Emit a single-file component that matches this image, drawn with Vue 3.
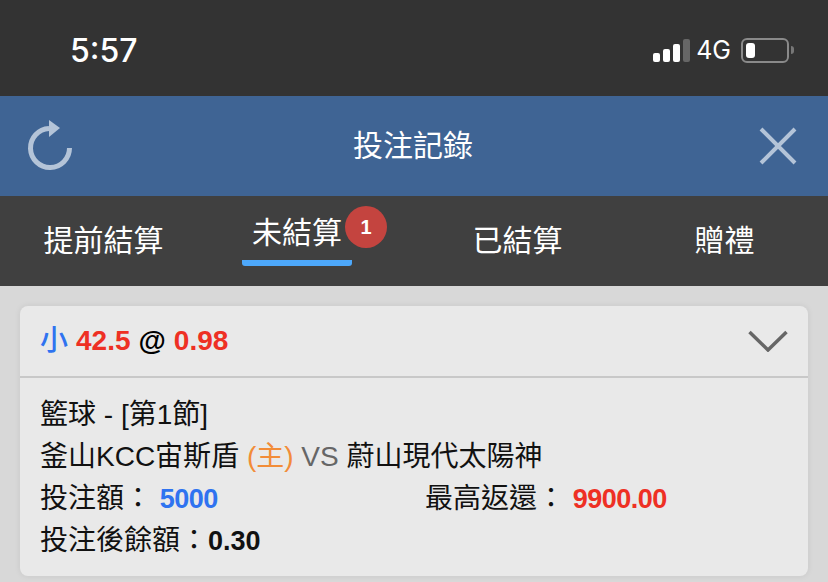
<script setup>
const tabs = [
  { label: '提前結算' },
  { label: '未結算', active: true, badge: 1 },
  { label: '已結算' },
  { label: '贈禮' }
]
</script>

<template>
  <div class="page">
    <div class="status-bar">
      <span class="time">5:57</span>
      <div class="status-right">
        <div class="signal">
          <i class="b1"></i><i class="b2"></i><i class="b3"></i><i class="b4"></i>
        </div>
        <span class="net">4G</span>
        <div class="battery"><i></i></div>
        <div class="battery-tip"></div>
      </div>
    </div>

    <header class="title-bar">
      <svg class="refresh" width="46" height="52" viewBox="0 0 46 52">
        <path d="M22 9.5 A19.5 19.5 0 1 0 42.5 29" fill="none" stroke="#b4c4d8" stroke-width="5" />
        <path d="M22 1 L33 9 L22 18 Z" fill="#b4c4d8" />
      </svg>
      <h1>投注記錄</h1>
      <svg class="close" width="38" height="38" viewBox="0 0 38 38">
        <path d="M2 2 L36 36 M36 2 L2 36" stroke="#b4c4d8" stroke-width="4" />
      </svg>
    </header>

    <nav class="tabs">
      <div v-for="tab in tabs" :key="tab.label" class="tab" :class="{ active: tab.active }">
        <span class="tab-label">
          {{ tab.label }}
          <b v-if="tab.badge" class="badge">{{ tab.badge }}</b>
        </span>
      </div>
    </nav>

    <main class="content">
      <section class="card">
        <div class="card-head">
          <div class="odds">
            <span class="blue cjk">小</span>
            <span class="red">42.5</span>
            <span>@</span>
            <span class="red">0.98</span>
          </div>
          <svg width="40" height="22" viewBox="0 0 40 22">
            <path d="M1.5 2 L20 20 L38.5 2" fill="none" stroke="#666" stroke-width="3.5" />
          </svg>
        </div>
        <div class="card-body">
          <div class="row">籃球 - [第1節]</div>
          <div class="row">釜山KCC宙斯盾 <span class="orange">(主)</span> <span class="grey">VS</span> 蔚山現代太陽神</div>
          <div class="row columns">
            <div class="col">投注額： <b class="blue num tight">5000</b></div>
            <div class="col">最高返還： <b class="red num tight">9900.00</b></div>
          </div>
          <div class="row">投注後餘額：<b class="num">0.30</b></div>
        </div>
      </section>
    </main>
  </div>
</template>

<style>
html, body {
  margin: 0;
  background: #d8d8d8;
  overflow: hidden;
}
</style>

<style scoped>
.page {
  width: 828px;
  height: 582px;
  overflow: hidden;
  font-family: "Liberation Sans", "Noto Sans CJK TC", sans-serif;
  background: #d8d8d8;
}

.status-bar {
  height: 96px;
  background: #333;
  color: #fff;
  display: flex;
  justify-content: space-between;
  align-items: center;
  padding: 4px 34px 0 70px;
  box-sizing: border-box;
}
.time {
  font-family: Inter, sans-serif;
  font-size: 32px;
  font-weight: 500;
}
.status-right {
  display: flex;
  align-items: center;
}
.signal {
  display: flex;
  align-items: flex-end;
  gap: 3px;
  height: 23px;
}
.signal i {
  width: 7px;
  border-radius: 2px;
  background: #fff;
}
.signal .b1 { height: 9px; }
.signal .b2 { height: 13px; }
.signal .b3 { height: 18px; }
.signal .b4 { height: 23px; background: #666; }
.net {
  font-family: Inter, sans-serif;
  font-size: 25px;
  margin: 0 10px 0 6px;
}
.battery {
  width: 48px;
  height: 25px;
  box-sizing: border-box;
  border: 2px solid #8a8a8a;
  border-radius: 6px;
  padding: 3px;
  display: flex;
}
.battery i {
  width: 9px;
  background: #fff;
  border-radius: 3px;
}
.battery-tip {
  width: 3px;
  height: 8px;
  margin-left: 2px;
  background: #777;
  border-radius: 0 3px 3px 0;
}

.title-bar {
  height: 100px;
  background: #3f6494;
  display: flex;
  align-items: center;
  justify-content: space-between;
  padding: 0 31px 0 27px;
}
.title-bar h1 {
  margin: 0 6px 0 0;
  color: #fff;
  font-size: 30px;
  font-weight: 400;
  line-height: 100px;
}
.refresh {
  margin-top: -2px;
}

.tabs {
  height: 90px;
  background: #404040;
  display: grid;
  grid-template-columns: repeat(4, 207px);
}
.tab {
  display: flex;
  justify-content: center;
  align-items: center;
  color: #fff;
  font-size: 30px;
}
.tab-label {
  position: relative;
  line-height: 44px;
  display: block;
}
.tab.active .tab-label {
  width: 110px;
  text-align: center;
  margin: 0 27px 5px 0;
  padding-bottom: 5px;
  border-bottom: 6px solid #4da8fb;
  border-radius: 3px;
}
.badge {
  position: absolute;
  top: -5px;
  left: 103px;
  width: 42px;
  height: 42px;
  border-radius: 50%;
  background: #c4443f;
  font-size: 20px;
  line-height: 42px;
  text-align: center;
}

.content {
  padding: 20px;
}
.card {
  height: 270px;
  background: #e9e9e9;
  border-radius: 8px;
  box-shadow: 0 0 6px rgba(0, 0, 0, 0.08);
}
.card-head {
  height: 70px;
  border-bottom: 2px solid #c8c8c8;
  display: flex;
  justify-content: space-between;
  align-items: center;
  padding: 0 20px 0 20px;
}
.odds {
  display: flex;
  align-items: baseline;
  gap: 8px;
  font-size: 28px;
  line-height: 40px;
  font-weight: 700;
  color: #000;
}
.odds .cjk {
  font-weight: 500;
}
.card-body {
  padding: 16px 20px 0;
  color: #111;
  font-size: 28px;
  line-height: 42px;
}
.row {
  height: 42px;
  white-space: nowrap;
}
.columns {
  display: grid;
  grid-template-columns: 385px 1fr;
}
.num {
  font-size: 27px;
}
.tight {
  letter-spacing: -0.5px;
}
.blue { color: #2f73f0; }
.red { color: #ee3024; }
.orange { color: #f28c38; }
.grey { color: #666; }
</style>
